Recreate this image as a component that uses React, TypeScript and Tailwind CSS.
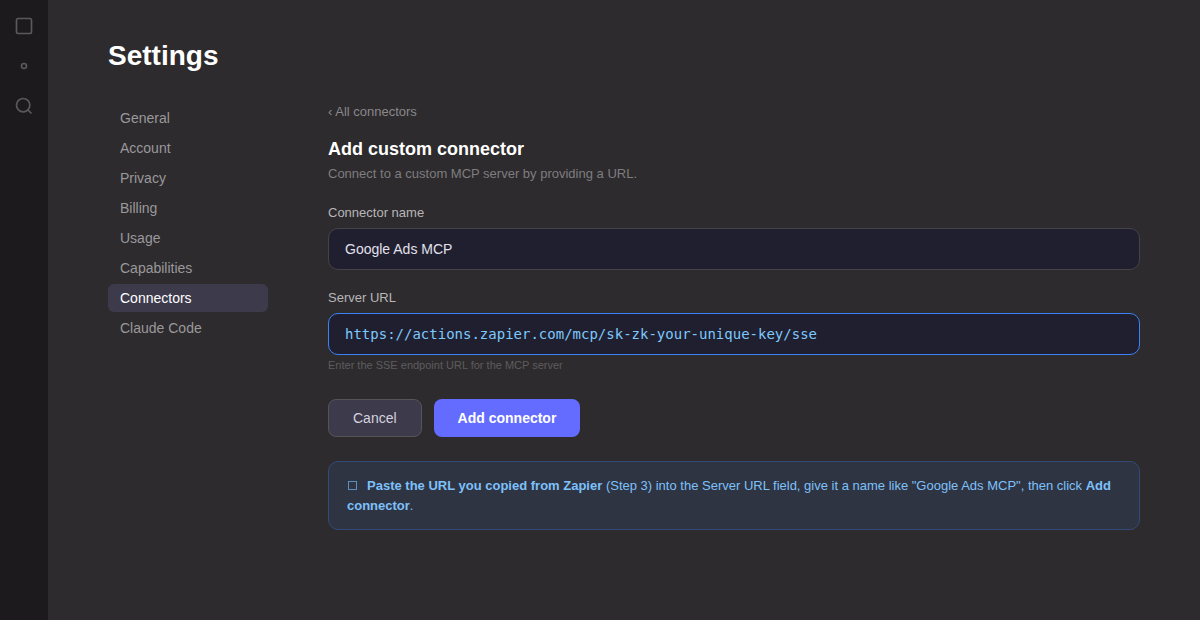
import { useState } from "react";

const sections = [
  "General",
  "Account",
  "Privacy",
  "Billing",
  "Usage",
  "Capabilities",
  "Connectors",
  "Claude Code",
];

const railButton = "flex size-5 items-center justify-center text-[#5a585b]";

function Rail() {
  return (
    <aside className="flex w-12 shrink-0 flex-col items-center gap-5 bg-[#1c1a1c] py-4">
      <button type="button" aria-label="Panel" className={railButton}>
        <svg width="20" height="20" viewBox="0 0 24 24" fill="none" stroke="currentColor" strokeWidth="2">
          <rect x="3" y="3" width="18" height="18" rx="2" />
        </svg>
      </button>
      <button type="button" aria-label="Settings" className={railButton}>
        <svg width="20" height="20" viewBox="0 0 24 24" fill="none" stroke="currentColor" strokeWidth="2">
          <circle cx="12" cy="12" r="3" />
        </svg>
      </button>
      <button type="button" aria-label="Search" className={railButton}>
        <svg width="20" height="20" viewBox="0 0 24 24" fill="none" stroke="currentColor" strokeWidth="2">
          <circle cx="11" cy="11" r="8" />
          <path d="M21 21l-4.35-4.35" />
        </svg>
      </button>
    </aside>
  );
}

function SectionNav() {
  return (
    <nav aria-label="Settings sections" className="flex w-40 shrink-0 flex-col gap-0.5">
      {sections.map((name) => {
        const active = name === "Connectors";
        return (
          <a
            key={name}
            href="#"
            aria-current={active ? "page" : undefined}
            className={
              active
                ? "rounded-md bg-[#3d3a4c] px-3 py-1 text-sm text-white"
                : "rounded-md px-3 py-1 text-sm text-[#9a989b]"
            }
          >
            {name}
          </a>
        );
      })}
    </nav>
  );
}

export default function App() {
  const [name, setName] = useState("Google Ads MCP");
  const [url, setUrl] = useState("https://actions.zapier.com/mcp/sk-zk-your-unique-key/sse");

  return (
    <div className="flex min-h-screen bg-[#2d2b2d] font-['Liberation_Sans',Arial,sans-serif]">
      <Rail />
      <main className="min-w-0 flex-1 px-[60px] py-10">
        <h1 className="text-[28px] leading-8 font-bold text-white">Settings</h1>
        <div className="mt-8 flex items-start gap-[60px]">
          <SectionNav />
          <form className="min-w-0 flex-1" onSubmit={(e) => e.preventDefault()}>
            <a href="#" className="block text-[13px] leading-4 text-[#8a888b]">
              ‹ All connectors
            </a>
            <h2 className="mt-[18px] text-lg leading-[22px] font-bold text-white">Add custom connector</h2>
            <p className="mt-1.5 text-[13px] leading-4 text-[#7f7d80]">
              Connect to a custom MCP server by providing a URL.
            </p>

            <label htmlFor="connector-name" className="mt-[23px] block text-[13px] leading-4 text-[#b8b6b9]">
              Connector name
            </label>
            <input
              id="connector-name"
              type="text"
              value={name}
              onChange={(e) => setName(e.target.value)}
              className="mt-[7px] block h-[42px] w-full rounded-[10px] border border-[#454347] bg-[#201f30] px-4 text-sm text-[#e2e0ec] outline-none"
            />

            <label htmlFor="server-url" className="mt-5 block text-[13px] leading-4 text-[#b8b6b9]">
              Server URL
            </label>
            <input
              id="server-url"
              type="text"
              aria-describedby="server-url-hint"
              value={url}
              onChange={(e) => setUrl(e.target.value)}
              className="mt-[7px] block h-[42px] w-full rounded-[10px] border border-[#3b82f6] bg-[#201f30] px-4 font-['DejaVu_Sans_Mono',monospace] text-sm text-[#7dc8fc] outline-none"
            />
            <p id="server-url-hint" className="mt-1 text-[11px] leading-3 text-[#5e5c5f]">
              Enter the SSE endpoint URL for the MCP server
            </p>

            <div className="mt-7 flex gap-3">
              <button
                type="button"
                className="h-[38px] rounded-lg border border-[#565459] bg-[#3d3a4c] px-6 text-sm text-[#d4d2de]"
              >
                Cancel
              </button>
              <button type="submit" className="h-[38px] rounded-lg bg-[#646cff] px-6 text-sm font-bold text-white">
                Add connector
              </button>
            </div>

            <p className="mt-6 rounded-[10px] border border-[#324a78] bg-[#2f3442] px-[18px] pt-3.5 pb-[13px] text-[13px] leading-5 text-[#7dc1fb]">
              <span aria-hidden="true" className="mr-2.5 ml-px inline-block size-[9px] border border-[#5a8fc0]" />
              <strong>Paste the URL you copied from Zapier</strong> (Step 3) into the Server URL field, give it a name
              like "Google Ads MCP", then click <strong>Add connector</strong>.
            </p>
          </form>
        </div>
      </main>
    </div>
  );
}
